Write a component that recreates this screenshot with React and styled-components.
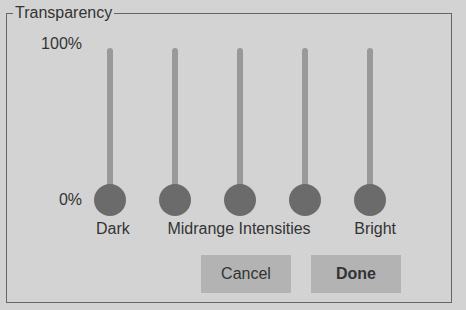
import React from "react";
import styled, { createGlobalStyle } from "styled-components";

const GlobalStyle = createGlobalStyle`
  html, body {
    margin: 0;
    padding: 0;
    background: #d3d3d3;
  }
  body {
    width: 466px;
    height: 310px;
    overflow: hidden;
    font-family: "Liberation Sans", Arial, sans-serif;
    color: #333;
  }
`;

const Panel = styled.fieldset`
  box-sizing: border-box;
  width: 446px;
  margin: 4px 0 0 6px;
  padding: 13px 0 9px 0;
  border: 1px solid #666;
  min-width: 0;
`;

const Legend = styled.legend`
  margin-left: 6px;
  padding: 0 2px;
  font-size: 16px;
  line-height: 18px;
  color: #333;
`;

const SliderArea = styled.div`
  display: flex;
`;

const Scale = styled.div`
  width: 75px;
  display: flex;
  flex-direction: column;
  justify-content: space-between;
  align-items: flex-end;
  padding-bottom: 7px;
  font-size: 16px;
  line-height: 18px;
`;

const Sliders = styled.div`
  display: flex;
  gap: 9px;
`;

const Slider = styled.div`
  width: 56px;
  display: flex;
  flex-direction: column;
  align-items: center;
  padding-top: 13px;
`;

const Track = styled.div`
  width: 6px;
  height: 152px;
  background: #999;
  border-radius: 3px 3px 0 0;
`;

const Thumb = styled.div`
  width: 32px;
  height: 32px;
  margin-top: -16px;
  border-radius: 50%;
  background: #6b6b6b;
`;

const Labels = styled.div`
  display: grid;
  grid-template-columns: auto 1fr auto;
  width: 300px;
  margin: 4px 0 0 89px;
  font-size: 16px;
  line-height: 18px;
`;

const Middle = styled.span`
  text-align: center;
  margin-right: 6px;
`;

const Buttons = styled.div`
  display: flex;
  justify-content: flex-end;
  gap: 20px;
  margin-top: 17px;
  padding-right: 50px;
`;

const Button = styled.button`
  width: 90px;
  height: 38px;
  border: none;
  background: #b3b3b3;
  color: #333;
  font-family: "Liberation Sans", Arial, sans-serif;
  font-size: 16px;
  font-weight: ${(p) => (p.$primary ? "bold" : "normal")};
  padding: 0;
`;

export default function App() {
  const sliders = ["dark", "low", "mid", "high", "bright"];
  return (
    <>
      <GlobalStyle />
      <Panel>
        <Legend>Transparency</Legend>
        <SliderArea>
          <Scale>
            <span>100%</span>
            <span>0%</span>
          </Scale>
          <Sliders>
            {sliders.map((s) => (
              <Slider key={s}>
                <Track />
                <Thumb />
              </Slider>
            ))}
          </Sliders>
        </SliderArea>
        <Labels>
          <span>Dark</span>
          <Middle>Midrange Intensities</Middle>
          <span>Bright</span>
        </Labels>
        <Buttons>
          <Button>Cancel</Button>
          <Button $primary>Done</Button>
        </Buttons>
      </Panel>
    </>
  );
}
